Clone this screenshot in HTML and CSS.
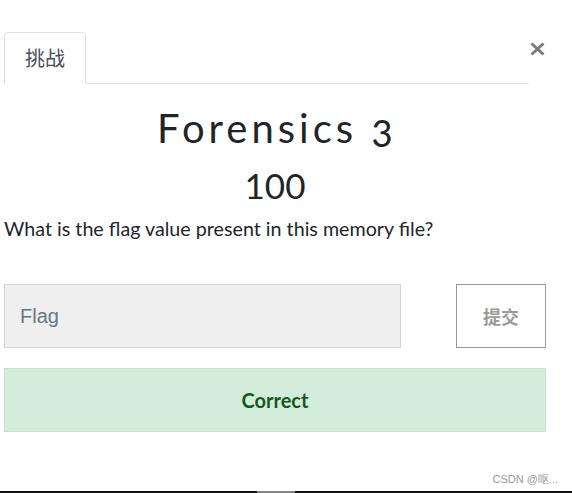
FILE: index.html
```html
<!DOCTYPE html>
<html lang="zh">
<head>
<meta charset="utf-8">
<title>Forensics 3</title>
<link rel="stylesheet" href="styles.css">
</head>
<body>
<div class="modal">
  <div class="modal-head">
    <ul class="nav-tabs">
      <li class="nav-item"><span class="nav-link active">挑战</span></li>
    </ul>
    <button class="close" type="button" aria-label="Close">
      <svg width="15" height="14" viewBox="0 0 15 14"><path d="M1.5 1.5 L13.5 12.5 M13.5 1.5 L1.5 12.5" stroke="#7b7b7b" stroke-width="3" stroke-linecap="butt"/></svg>
    </button>
  </div>
  <h2 class="title">Forensics 3</h2>
  <h3 class="value">100</h3>
  <p class="desc">What is the flag value present in this memory file?</p>
  <form class="submit-row">
    <input class="flag-input" type="text" placeholder="Flag">
    <button class="submit-btn" type="button">提交</button>
  </form>
  <div class="alert">Correct</div>
  <div class="footer-mark">CSDN @呕...</div>
</div>
<div class="bottom-bar"><span class="bar-thumb"></span></div>
</body>
</html>
```
FILE: styles.css
```css
html, body {
  margin: 0;
  padding: 0;
  background: #ffffff;
}
body {
  width: 572px;
  height: 493px;
  overflow: hidden;
  font-family: "Lato", "Noto Sans CJK SC", sans-serif;
  color: #212529;
}
.modal {
  padding: 32px 26px 0 4px;
  height: 491px;
  box-sizing: border-box;
  display: flex;
  flex-direction: column;
}
.modal-head {
  display: flex;
  align-items: flex-start;
  margin-right: -26px;
}
.nav-tabs {
  list-style: none;
  margin: 0;
  padding: 0;
  flex: 1;
  display: flex;
  border-bottom: 1px solid #dee2e6;
}
.nav-item {
  margin-bottom: -1px;
}
.nav-link {
  display: block;
  padding: 10px 20px;
  font-size: 20px;
  line-height: 30px;
  color: #495057;
  border: 1px solid #dee2e6;
  border-bottom-color: #fff;
  border-radius: 4px 4px 0 0;
  background: #fff;
  font-family: "Noto Sans CJK SC", sans-serif;
}
.close {
  background: none;
  border: 0;
  padding: 0;
  margin: 10px 27px 0 1px;
  width: 15px;
  height: 14px;
  display: flex;
}
.title {
  margin: 20px 0 0;
  text-align: center;
  font-size: 40px;
  line-height: 48px;
  font-weight: 400;
  letter-spacing: 4px;
  text-indent: 4px;
  font-variant-numeric: oldstyle-nums;
  color: #212529;
}
.value {
  margin: 12px 0 0;
  text-align: center;
  font-size: 35px;
  line-height: 42px;
  font-weight: 400;
  color: #212529;
}
.desc {
  margin: 8px 0 0;
  font-size: 19.7px;
  line-height: 30px;
  color: #212529;
}
.submit-row {
  margin: 40px 0 0;
  display: flex;
  justify-content: space-between;
}
.flag-input {
  width: 397px;
  height: 64px;
  box-sizing: border-box;
  margin: 0;
  padding: 0 15px;
  background: #efefef;
  border: 1px solid #ced4da;
  border-radius: 0;
  font-family: "Liberation Sans", Arial, sans-serif;
  font-size: 20px;
  color: #495057;
}
.flag-input::placeholder {
  color: #6c757d;
}
.submit-btn {
  width: 90px;
  height: 64px;
  box-sizing: border-box;
  margin: 0;
  background: #fff;
  border: 1px solid #9a9a9a;
  border-radius: 0;
  font-family: "Noto Sans CJK SC", sans-serif;
  font-weight: 700;
  font-size: 18px;
  color: #9a9a9a;
}
.alert {
  margin-top: 20px;
  height: 64px;
  box-sizing: border-box;
  display: flex;
  align-items: center;
  justify-content: center;
  background: #d4edda;
  border: 1px solid #c3e6cb;
  color: #155724;
  font-weight: 700;
  font-size: 20px;
}
.footer-mark {
  margin: auto -12px 0 0;
  align-self: flex-end;
  font-family: "Liberation Sans", sans-serif;
  font-size: 11px;
  line-height: 13px;
  color: #999;
  padding-bottom: 5px;
}
.bottom-bar {
  height: 2px;
  background: #111;
}
.bar-thumb {
  display: block;
  margin-left: 257px;
  width: 38px;
  height: 2px;
  background: #888;
}
```
